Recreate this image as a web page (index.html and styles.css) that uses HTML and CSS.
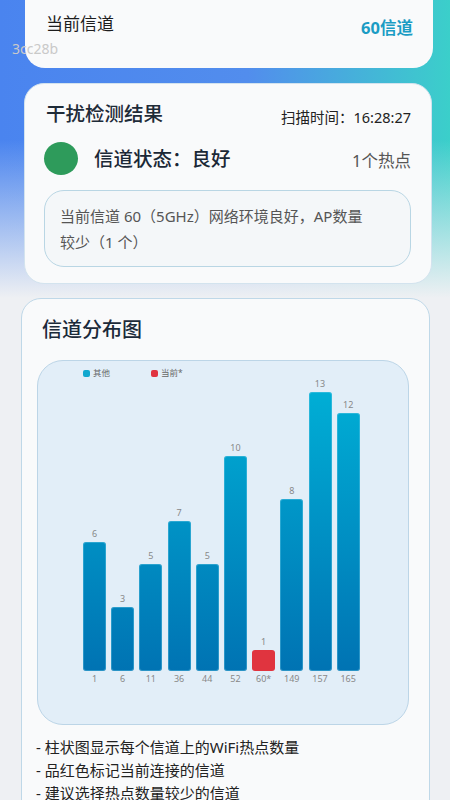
FILE: index.html
```html
<!DOCTYPE html>
<html lang="zh-CN">
<head>
    <meta charset="UTF-8">
    <meta name="viewport" content="width=device-width, initial-scale=1.0">
    <title>信道检测</title>
    <link rel="stylesheet" href="styles.css">
</head>
<body>
    <div class="watermark">3cc28b</div>

    <div class="card current-card">
        <span class="current-label">当前信道</span>
        <span class="current-value">60信道</span>
    </div>

    <div class="card result-card">
        <div class="result-head">
            <h2>干扰检测结果</h2>
            <span class="scan-time">扫描时间：16:28:27</span>
        </div>
        <div class="status-row">
            <span class="status-dot"></span>
            <span class="status-text">信道状态：良好</span>
            <span class="status-count">1个热点</span>
        </div>
        <div class="result-note">当前信道 60（5GHz）网络环境良好，AP数量较少（1 个）</div>
    </div>

    <div class="card chart-card">
        <h2>信道分布图</h2>
        <div class="chart">
            <div class="legend">
                <span class="legend-item"><i class="swatch"></i>其他</span>
                <span class="legend-item"><i class="swatch swatch-current"></i>当前*</span>
            </div>
            <div class="bars">
                <div class="col"><span class="val">6</span><div class="bar" style="height:129px"></div><span class="ch">1</span></div>
                <div class="col"><span class="val">3</span><div class="bar" style="height:64.5px"></div><span class="ch">6</span></div>
                <div class="col"><span class="val">5</span><div class="bar" style="height:107.5px"></div><span class="ch">11</span></div>
                <div class="col"><span class="val">7</span><div class="bar" style="height:150.5px"></div><span class="ch">36</span></div>
                <div class="col"><span class="val">5</span><div class="bar" style="height:107.5px"></div><span class="ch">44</span></div>
                <div class="col"><span class="val">10</span><div class="bar" style="height:215px"></div><span class="ch">52</span></div>
                <div class="col"><span class="val">1</span><div class="bar bar-current" style="height:21.5px"></div><span class="ch">60*</span></div>
                <div class="col"><span class="val">8</span><div class="bar" style="height:172px"></div><span class="ch">149</span></div>
                <div class="col"><span class="val">13</span><div class="bar" style="height:279.5px"></div><span class="ch">157</span></div>
                <div class="col"><span class="val">12</span><div class="bar" style="height:258px"></div><span class="ch">165</span></div>
            </div>
        </div>
        <ul class="notes">
            <li>- 柱状图显示每个信道上的WiFi热点数量</li>
            <li>- 品红色标记当前连接的信道</li>
            <li>- 建议选择热点数量较少的信道</li>
        </ul>
    </div>
</body>
</html>
```

FILE: styles.css
```css
html {
    background-color: #eef0f3;
}
body {
    margin: 0;
    padding: 0;
    height: 800px;
    overflow: hidden;
    font-family: "Noto Sans", "Noto Sans CJK SC", sans-serif;
    color: #1d1d1d;
    background:
        linear-gradient(to bottom, rgba(238, 240, 243, 0) 0, rgba(238, 240, 243, 0) 140px, rgba(238, 240, 243, 1) 298px),
        linear-gradient(90deg, #4a84ef 0%, #528ded 55%, #3bcfca 100%);
    background-size: 100% 300px, 100% 300px;
    background-repeat: no-repeat;
    background-color: #eef0f3;
    position: relative;
}
h2 {
    margin: 0;
    font-weight: 500;
}
.watermark {
    position: absolute;
    left: 12px;
    top: 39px;
    font-size: 14px;
    line-height: 20px;
    color: #c9c9c9;
    z-index: 2;
}
.card {
    background-color: #f9fafb;
    border-radius: 20px;
    box-sizing: border-box;
}

/* current channel */
.current-card {
    margin: -22px 17px 0 25px;
    height: 90px;
    padding: 34px 20px 0 21px;
    display: flex;
    justify-content: space-between;
    align-items: flex-start;
}
.current-label {
    font-size: 17px;
    line-height: 24px;
}
.current-value {
    font-size: 16.5px;
    line-height: 24px;
    font-weight: bold;
    color: #1b9cc4;
    margin-top: 4px;
}

/* detection result */
.result-card {
    margin: 15px 18px 0 24px;
    padding: 16px 20px 16px 19px;
    border: 1px solid #d3e3ee;
}
.result-head {
    display: flex;
    justify-content: space-between;
    align-items: flex-end;
}
.result-head h2 {
    font-size: 19.5px;
    line-height: 28px;
    padding-left: 2px;
    color: #1e2b38;
}
.scan-time {
    font-size: 14.5px;
    line-height: 22px;
    color: #222;
}
.status-row {
    display: flex;
    align-items: center;
    margin-top: 14px;
}
.status-dot {
    width: 34px;
    height: 33px;
    border-radius: 50%;
    background-color: #2e9b5b;
}
.status-text {
    margin-left: 16px;
    font-size: 19.5px;
    line-height: 28px;
    font-weight: 500;
    color: #1b2836;
}
.status-count {
    margin-left: auto;
    font-size: 16.5px;
    line-height: 24px;
    color: #555;
    padding-top: 5px;
}
.result-note {
    margin-top: 15px;
    padding: 12px 44px 11px 15px;
    border: 1px solid #b9d6e4;
    border-radius: 20px;
    background-color: #f4f7f9;
    font-size: 15px;
    line-height: 26px;
    color: #555;
}

/* chart */
.chart-card {
    margin: 14px 20px 0 21px;
    padding: 16px 0 0 0;
    border: 1px solid #bfd8e8;
    height: 560px;
}
.chart-card h2 {
    font-size: 20px;
    line-height: 30px;
    padding-left: 20px;
    color: #1b2a3a;
}
.chart {
    margin: 15px 20px 0 15px;
    height: 365px;
    box-sizing: border-box;
    background-color: #e2eef8;
    border: 1px solid #bcd5e7;
    border-radius: 26px;
    padding: 6px 0 0 45px;
}
.legend {
    display: flex;
    gap: 41px;
    font-size: 8.5px;
    line-height: 12px;
    color: #666;
}
.legend-item {
    display: flex;
    align-items: center;
    gap: 3px;
}
.swatch {
    display: inline-block;
    width: 7px;
    height: 7px;
    border-radius: 2px;
    background-color: #12a8cf;
}
.swatch-current {
    background-color: #e03340;
}
.bars {
    display: flex;
    align-items: flex-end;
    gap: 5.2px;
    height: 305px;
}
.col {
    width: 23px;
    display: flex;
    flex-direction: column;
    align-items: center;
}
.val,
.ch {
    font-size: 9px;
    line-height: 10px;
    color: #888;
}
.val {
    margin-bottom: 3px;
}
.ch {
    margin-top: 3px;
}
.bar {
    width: 100%;
    border-radius: 3px;
    background: linear-gradient(to top, #0073b3, #00aed5) bottom / 100% 280px no-repeat;
    background-color: #00aed5;
    box-shadow: inset 0 0 0 1px rgba(120, 210, 235, 0.35);
}
.bar-current {
    background: #e0343f;
    box-shadow: none;
}
.notes {
    list-style: none;
    margin: 11px 0 0 0;
    padding: 0 0 0 14px;
    font-size: 15px;
    line-height: 23px;
    color: #222;
}
```
